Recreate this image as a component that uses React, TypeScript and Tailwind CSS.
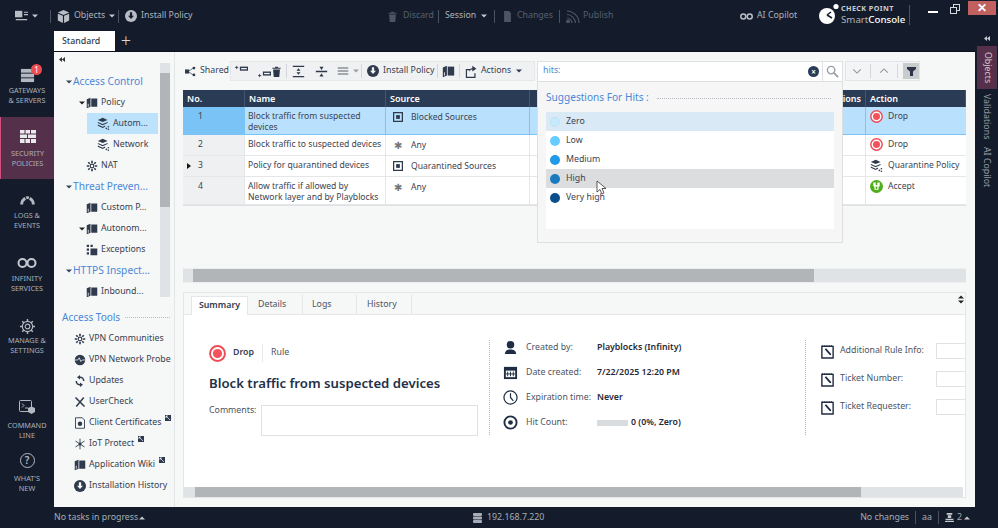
import React from "react";

const I = ({ s = 14, c = "currentColor", children, className = "" }: { s?: number; c?: string; children: React.ReactNode; className?: string }) => (
  <svg width={s} height={s} viewBox="0 0 16 16" fill={c} stroke="none" className={`shrink-0 ${className}`}>{children}</svg>
);
const Caret = ({ c = "#c4c9d0" }: { c?: string }) => (
  <svg width="6" height="4" viewBox="0 0 6 4" className="shrink-0"><path d="M0 0.5h6L3 3.5z" fill={c} /></svg>
);
const CaretUp = ({ c = "#c4c9d0" }: { c?: string }) => (
  <svg width="6" height="4" viewBox="0 0 6 4" className="shrink-0"><path d="M0 3.5h6L3 0.5z" fill={c} /></svg>
);
const DoubleLeft = ({ c = "#333" }: { c?: string }) => (
  <svg width="6" height="5" viewBox="0 0 6 5" className="shrink-0"><path d="M3 0v5L0 2.5zM6 0v5L3 2.5z" fill={c} /></svg>
);
const Sep = ({ c = "bg-[#4a5361]", h = "h-[13px]" }: { c?: string; h?: string }) => <div className={`w-px ${h} ${c} shrink-0`} />;
const ToolSep = () => <div className="w-px h-[14px] bg-[#d5d7da] shrink-0" />;

const InstallIcon = ({ s = 12, c = "#b9bec6", a = "#141c2b" }: { s?: number; c?: string; a?: string }) => (
  <I s={s}><circle cx="8" cy="8" r="8" fill={c} /><path d="M6.5 3h3v4.5H12L8 12 4 7.5h2.5z" fill={a} /></I>
);
const Trash = ({ s = 12, c = "#2a3548" }: { s?: number; c?: string }) => (
  <I s={s}><path d="M6 1h4v1.5h4V4H2V2.500h4zM3 5h10l-1 11H4z" fill={c} /></I>
);
const DropIcon = ({ s = 13 }: { s?: number }) => (
  <I s={s}><circle cx="8" cy="8" r="7" fill="#fff" stroke="#ee4c54" strokeWidth="1.8" /><circle cx="8" cy="8" r="4.3" fill="#f4525a" /></I>
);
const Layers = ({ s = 13, c = "#2f3a4d" }: { s?: number; c?: string }) => (
  <I s={s}><path d="M7 1l6 2.600-6 2.600-6-2.600z" fill={c} /><path d="M1 6l6 2.600L13 6v1.500L7 10.200 1 7.500z" fill={c} /><path d="M1 9.300l6 2.600 3-1.300v1.500l-3 1.300-6-2.600z" fill={c} /><circle cx="14" cy="12" r="1" fill={c} /><circle cx="11.500" cy="14" r="1" fill={c} /><circle cx="14" cy="15" r="1" fill={c} /></I>
);
const Book = ({ s = 13, c = "#2f3a4d" }: { s?: number; c?: string }) => (
  <I s={s}><path d="M1 3l5-2v12l-5 2z" fill={c} /><path d="M7 2l8 0v11H7z" fill={c} /><path d="M3 9v4" stroke="#fff" strokeWidth="1" /></I>
);
const Note = ({ c = "#1f2d44" }: { c?: string }) => (
  <I s={15}>
    <path d="M2 2.500h12V15H2z" fill="#fff" stroke={c} strokeWidth="1.500" />
    <path d="M2 1h1v2H2zM4 1h1v2H4zM6 1h1v2H6zM8 1h1v2H8zM10 1h1v2h-1zM12 1h1v2h-1z" fill={c} />
    <path d="M5 5.500l1.500-1 5 5.500 .5 2-2-.5z" fill={c} />
  </I>
);
const Gears = ({ s = 13, c = "#2f3a4d" }: { s?: number; c?: string }) => (
  <I s={s}><circle cx="8" cy="8" r="2.500" fill="none" stroke={c} strokeWidth="1.600" />
    <path d="M8 1v3M8 12v3M1 8h3M12 8h3M3 3l2 2M11 11l2 2M13 3l-2 2M5 11l-2 2" stroke={c} strokeWidth="2.200" />
  </I>
);

const RailItem = ({ icon, lines, active, h, box = "h-[24px]", gap = "mt-[6px]", pt = "pt-[2px]" }: { icon: React.ReactNode; lines: string[]; active?: boolean; h: string; box?: string; gap?: string; pt?: string }) => (
  <div className={`flex flex-col items-center justify-start ${h} ${pt} ${active ? "bg-[#54304a] border-l border-[#d14f7e]" : ""}`}>
    <div className={`${box} flex items-end justify-center`}>{icon}</div>
    <div className={`${gap} text-center text-[7.300px] leading-[9.500px] text-[#aab0b9] whitespace-nowrap`}>
      {lines.map((l) => <div key={l}>{l}</div>)}
    </div>
  </div>
);

const TreeHead = ({ t }: { t: string }) => (
  <div className="h-[21px] flex items-center pl-[12px] gap-[1px] text-[#4a88d8] text-[10.200px] whitespace-nowrap">
    <Caret c="#39465a" />{t}
  </div>
);
const TreeRow = ({ pl, icon, t, sel, caret }: { pl: string; icon: React.ReactNode; t: string; sel?: boolean; caret?: boolean }) => (
  <div className={`h-[21px] flex items-center ${pl} text-[#374151] text-[8.800px] whitespace-nowrap`}>
    <div className={`flex items-center gap-[3px] h-[21px] ${sel ? "bg-[#bde2fb] w-[71px] pl-[10px]" : ""}`}>
      {caret && <div className="-ml-[7px] -mr-[2px]"><Caret c="#222" /></div>}{icon}<span>{t}</span>
    </div>
  </div>
);
const ToolRow = ({ icon, t, ext }: { icon: React.ReactNode; t: string; ext?: boolean }) => (
  <div className="h-[21px] flex items-center pl-[20px] gap-[3px] text-[#374151] text-[8.800px] whitespace-nowrap">
    <div className="w-[12px] flex justify-center shrink-0">{icon}</div>
    <span>{t}</span>
    {ext && <svg width="6" height="6" viewBox="0 0 6 6" className="ml-[1px] -mt-[9px]"><rect width="6" height="6" fill="#2f3a4d" /><path d="M1 1l4 4M1 1h2M1 1v2" stroke="#fff" strokeWidth="0.700" fill="none" /></svg>}
  </div>
);

const HeadCell = ({ t, r }: { t: string; r?: boolean }) => (
  <div className={`h-[17px] flex items-center px-[4px] text-white font-semibold text-[9px] border-r border-[#45556d] whitespace-nowrap ${r ? "justify-end" : ""}`}>{t}</div>
);

const Any = () => <span className="w-[10px] text-center text-[#777] text-[10px] leading-[10px]">✱</span>;
const Grp = () => <I s={10}><rect x="1" y="1" width="14" height="14" fill="none" stroke="#2f3a4d" strokeWidth="2" /><rect x="5" y="5" width="6" height="6" fill="#2f3a4d" /></I>;

const rows = [
  { n: "1", name: ["Block traffic from suspected", "devices"], src: "Blocked Sources", any: false, act: "Drop", sel: true, h: "h-[28px]" },
  { n: "2", name: ["Block traffic to suspected devices"], src: "Any", any: true, act: "Drop", h: "h-[21px]" },
  { n: "3", name: ["Policy for quarantined devices"], src: "Quarantined Sources", any: false, act: "Quarantine Policy", h: "h-[21px]", arrow: true },
  { n: "4", name: ["Allow traffic if allowed by", "Network layer and by Playblocks"], src: "Any", any: true, act: "Accept", h: "h-[28px]" },
];

const ActionIcon = ({ a }: { a: string }) => {
  if (a === "Drop") return <DropIcon s={13} />;
  if (a === "Accept") return <I s={13}><circle cx="8" cy="8" r="8" fill="#4fae1b" /><path d="M4 3h3v3h2V3h3v4l-1.500 2v3h-5V9L4 7z" fill="#fff" /><path d="M7 8h2v3H7z" fill="#4fae1b" /></I>;
  return <Layers s={13} />;
};

const Level = ({ c, t, bg }: { c: string; t: string; bg?: string }) => (
  <div className={`h-[19px] flex items-center pl-[4px] gap-[6px] text-[8.800px] text-[#3b4350] ${bg ?? ""}`}>
    <div className={`w-[10px] h-[10px] rounded-full ${c}`} />{t}
  </div>
);

const Meta = ({ icon, k, children }: { icon: React.ReactNode; k: string; children: React.ReactNode }) => (
  <div className="h-[25px] flex items-center text-[8.800px]">
    <div className="w-[16px] flex justify-center shrink-0">{icon}</div>
    <div className="w-[71px] ml-[8px] text-[#4b5563] whitespace-nowrap">{k}</div>
    <div className="font-semibold text-[#1f2937] whitespace-nowrap">{children}</div>
  </div>
);
const Ticket = ({ k }: { k: string }) => (
  <div className="h-[28px] flex items-center text-[8.800px]">
    <Note />
    <div className="w-[96px] ml-[5px] text-[#4b5563] whitespace-nowrap">{k}</div>
    <div className="w-[30px] h-[16px] border border-r-0 border-[#dfe1e4] bg-white" />
  </div>
);

export default function App() {
  return (
    <div className="relative w-[998px] h-[528px] overflow-hidden bg-[#141c2b] flex flex-col font-['Noto_Sans',sans-serif]">
      {/* title bar */}
      <div className="h-[31px] shrink-0 flex items-start text-[8.800px] text-[#aeb4bd]">
        <div className="flex items-center h-[28px] mt-[2px] pl-[15px] whitespace-nowrap">
          <I s={13} c="#b9bec6"><rect x="0" y="1" width="9" height="8" /><path d="M11 2h5v1.500h-5zM11 5h5v1.500h-5zM1 11h14v1.500H1z" /></I>
          <div className="ml-[4px]"><Caret /></div>
          <div className="ml-[12px]"><Sep /></div>
          <div className="ml-[6px]"><I s={13} c="#b9bec6"><path d="M8 0l7 3-7 3-7-3zM1 4.500l6.300 2.700V16L1 13zM15 4.500L8.700 7.200V16L15 13z" /></I></div>
          <span className="ml-[4px] w-[29px]">Objects</span>
          <div className="ml-[6px]"><Caret /></div>
          <div className="ml-[3px]"><Sep /></div>
          <div className="ml-[6px]"><InstallIcon /></div>
          <span className="ml-[4px] w-[49px]">Install Policy</span>
        </div>
        <div className="flex items-center h-[28px] mt-[2px] ml-[197px] text-[#57606d] whitespace-nowrap">
          <Trash s={11} c="#4d5562" />
          <span className="ml-[5px] w-[28px]">Discard</span>
          <div className="ml-[7px]"><Sep /></div>
          <span className="ml-[6px] w-[31px] text-[#aeb4bd]">Session</span>
          <div className="ml-[5px]"><Caret /></div>
          <div className="ml-[7px]"><Sep /></div>
          <div className="ml-[7px]"><I s={11} c="#4d5562"><path d="M3 0h7l3 3v13H3z" /></I></div>
          <span className="ml-[4px] w-[35px]">Changes</span>
          <div className="ml-[7px]"><Sep /></div>
          <svg width="14" height="13" viewBox="0 0 14 13" fill="none" stroke="#4d5562" strokeWidth="1.200" className="ml-[6px]"><path d="M1 1c6 0 12 5 12 12M1 4.500c4 0 8.500 4 8.500 8.500M1 8c2.500 0 5 2.500 5 5" /><circle cx="2" cy="11.500" r="1.300" fill="#4d5562" /></svg>
          <span className="ml-[3px] w-[29px]">Publish</span>
        </div>
        <div className="flex items-center h-[28px] mt-[2px] ml-[128px] whitespace-nowrap">
          <svg width="13" height="7" viewBox="0 0 13 7" fill="none" stroke="#b9bec6" strokeWidth="1.500"><circle cx="3.300" cy="3.500" r="2.500" /><circle cx="9.700" cy="3.500" r="2.500" /></svg>
          <span className="ml-[4px] w-[39px]">AI Copilot</span>
        </div>
        <div className="flex items-center h-[28px] mt-[1px] ml-[23px]">
          <svg width="20" height="22" viewBox="0 0 20 22" className="-mt-[2px]">
            <circle cx="17" cy="3.500" r="2.600" fill="#fff" />
            <circle cx="8" cy="13" r="8" fill="#fff" />
            <path d="M8 12l5 3M8 12l4-3" stroke="#141c2b" strokeWidth="1.500" />
          </svg>
          <div className="ml-[2px] flex flex-col w-[63px]">
            <span className="text-[7.200px] leading-[9px] font-bold tracking-[0.4px] text-[#c9cdd3] whitespace-nowrap">CHECK POINT</span>
            <span className="text-[9.700px] leading-[13px] text-[#aeb4bd] whitespace-nowrap">Smart<span className="text-white font-medium">Console</span></span>
          </div>
          <div className="ml-[5px]"><Sep h="h-[20px]" /></div>
        </div>
        <div className="flex items-start ml-auto h-[15px] mt-[1px]">
          <div className="w-[10px] h-[2px] bg-white mt-[10px]" />
          <div className="relative w-[10px] h-[10px] ml-[12px] mt-[3px]">
            <div className="absolute right-0 top-0 w-[7px] h-[7px] border border-[#d6d9de]" />
            <div className="absolute left-0 bottom-0 w-[7px] h-[7px] border border-[#d6d9de] bg-[#141c2b]" />
          </div>
          <div className="ml-[8px] mr-[2px] w-[28px] h-[14px] bg-[#c0605f] flex items-center justify-center text-white text-[12px] leading-none font-bold">✕</div>
        </div>
      </div>

      {/* body */}
      <div className="flex-1 min-h-0 flex">
        {/* left rail */}
        <div className="w-[54px] shrink-0 flex flex-col pt-[25px]">
          <div className="relative">
            <RailItem h="h-[61px]" pt="pt-0" box="h-[27px]" gap="mt-[3px]" lines={["GATEWAYS", "& SERVERS"]} icon={
              <I s={15} c="#b4b9c1"><rect x="1" y="1" width="14" height="4" /><rect x="1" y="6" width="14" height="4" /><rect x="1" y="11" width="14" height="4" /></I>} />
            <div className="absolute top-[8px] left-[31px] w-[11px] h-[11px] rounded-full bg-[#ef4c50] text-white text-[8px] leading-[11px] text-center">1</div>
          </div>
          <RailItem active h="h-[62px]" lines={["SECURITY", "POLICIES"]} icon={
            <svg width="16" height="13" viewBox="0 0 16 13" fill="#e7e9ec"><path d="M0 0h4.500v3.500H0zM5.500 0H10v3.500H5.500zM11 0h5v3.500h-5zM0 4.500h7v3.500H0zM8 4.500h8v3.500H8zM0 9h4.500v4H0zM5.500 9H10v4H5.500zM11 9h5v4h-5z" /></svg>} />
          <RailItem h="h-[63px]" lines={["LOGS &", "EVENTS"]} icon={
            <svg width="17" height="9" viewBox="0 0 17 10" fill="none" stroke="#b4b9c1" strokeWidth="3.200"><path d="M2 9.500C2 6 3.500 4 6 2.500M7 2c1-.3 2-.3 3 0M11 2.500c2.500 1.500 4 3.500 4 7" /></svg>} />
          <RailItem h="h-[62px]" lines={["INFINITY", "SERVICES"]} icon={
            <svg width="20" height="10" viewBox="0 0 20 10" fill="none" stroke="#c4c8cf" strokeWidth="2"><circle cx="5.500" cy="5" r="4" /><circle cx="14.500" cy="5" r="4" /></svg>} />
          <RailItem h="h-[63px]" box="h-[28px]" gap="mt-[2px]" lines={["MANAGE &", "SETTINGS"]} icon={
            <svg width="15" height="15" viewBox="0 0 16 16" fill="none" stroke="#b4b9c1"><circle cx="8" cy="8" r="5.500" strokeWidth="1.200" /><circle cx="8" cy="8" r="2.500" strokeWidth="1.200" /><path d="M8 0v3M8 13v3M0 8h3M13 8h3M2.300 2.300l2 2M11.700 11.700l2 2M13.700 2.300l-2 2M4.300 11.700l-2 2" strokeWidth="1.500" /></svg>} />
          <div className="h-[22px]" />
          <RailItem h="h-[54px]" lines={["COMMAND", "LINE"]} icon={
            <svg width="16" height="15" viewBox="0 0 16 15" fill="none" stroke="#b4b9c1"><rect x="0.500" y="0.500" width="12" height="11" rx="1" /><path d="M3 3.500l2 2-2 2M6 8h3" /><path d="M9 8l3.500-1.500L16 8v4l-3.500 2L9 12z" fill="#b4b9c1" stroke="none" /></svg>} />
          <RailItem h="h-[50px]" lines={["WHAT'S", "NEW"]} icon={
            <div className="w-[15px] h-[15px] rounded-full border-[1.500px] border-[#b4b9c1] text-[#b4b9c1] text-[10px] leading-[12px] text-center font-semibold">?</div>} />
        </div>

        {/* center */}
        <div className="flex-1 min-w-0 flex flex-col">
          <div className="h-[20px] shrink-0 flex items-stretch">
            <div className="w-[61px] bg-white flex items-center pl-[8px] pt-[1px] text-[8.800px] font-medium text-[#2f3a4d]">Standard</div>
            <div className="ml-[4px] text-[#d6d9de] text-[18px] leading-[19px] w-[14px] text-center font-light">+</div>
          </div>
          <div className="flex-1 min-h-0 flex bg-[#f6f7f7] border-t border-[#0b111b] relative">
            {/* tree */}
            <div className="w-[121px] shrink-0 border-r border-[#e3e5e8] flex flex-col">
              <div className="h-[19px] pl-[5px] flex items-start pt-[5px]"><DoubleLeft /></div>
              <div className="flex">
                <div className="w-[106px] shrink-0 min-w-0 overflow-hidden">
                  <TreeHead t="Access Control" />
                  <TreeRow pl="pl-[32px]" caret icon={<Book s={12} />} t="Policy" />
                  <TreeRow pl="pl-[33px]" sel icon={<Layers />} t="Autom..." />
                  <TreeRow pl="pl-[43px]" icon={<Layers />} t="Network" />
                  <TreeRow pl="pl-[32px]" icon={<Gears s={12} />} t="NAT" />
                  <TreeHead t="Threat Preven..." />
                  <TreeRow pl="pl-[32px]" icon={<Book s={12} />} t="Custom P..." />
                  <TreeRow pl="pl-[32px]" caret icon={<Book s={12} />} t="Autonom..." />
                  <TreeRow pl="pl-[32px]" icon={<I s={12} c="#2f3a4d"><rect x="1" y="1" width="3" height="3" /><rect x="6" y="1" width="3" height="3" /><rect x="1" y="6" width="3" height="3" /><rect x="6" y="6" width="9" height="9" /><rect x="1" y="11" width="3" height="3" /></I>} t="Exceptions" />
                  <TreeHead t="HTTPS Inspect..." />
                  <TreeRow pl="pl-[32px]" icon={<Book s={12} />} t="Inbound..." />
                </div>
                <div className="w-[10px] h-[234px] -mt-[8px] bg-[#dfe3e6] shrink-0 pt-[10px]">
                  <div className="h-[134px] bg-[#b1b5b8]" />
                </div>
              </div>
              <div className="mt-[5px] h-[21px] flex items-center pl-[8px] gap-[5px] text-[#4a88d8] text-[10px] pr-[4px]">
                <span className="whitespace-nowrap">Access Tools</span>
                <div className="flex-1 border-t border-dotted border-[#b8bcc2]" />
              </div>
              <ToolRow icon={<Gears s={12} />} t="VPN Communities" />
              <ToolRow icon={<I s={12} c="#2f3a4d"><circle cx="8" cy="8" r="7" /><path d="M1 8h4l2-3 2 5 2-2h4" stroke="#fff" fill="none" /></I>} t="VPN Network Probe" />
              <ToolRow icon={<I s={12} c="#2f3a4d"><path d="M8 2a6 6 0 0 1 6 6h-2a4 4 0 0 0-4-4V6L4 3l4-3zM8 14a6 6 0 0 1-6-6h2a4 4 0 0 0 4 4v-2l4 3-4 3z" /></I>} t="Updates" />
              <ToolRow icon={<I s={12} c="#2f3a4d"><path d="M2 2l12 12M13 2L3 14" stroke="#2f3a4d" strokeWidth="2" /></I>} t="UserCheck" />
              <ToolRow ext icon={<I s={12} c="#2f3a4d"><path d="M3 1h8l3 3v11H2V1z" fill="none" stroke="#2f3a4d" strokeWidth="1.200" /><circle cx="8" cy="9" r="3" /></I>} t="Client Certificates" />
              <ToolRow ext icon={<I s={12} c="#2f3a4d"><circle cx="8" cy="8" r="2" /><path d="M8 1v14M2 4l12 8M14 4L2 12" stroke="#2f3a4d" strokeWidth="1.200" /></I>} t="IoT Protect" />
              <ToolRow ext icon={<Book s={12} />} t="Application Wiki" />
              <ToolRow icon={<InstallIcon s={12} c="#2f3a4d" a="#f6f7f7" />} t="Installation History" />
            </div>

            {/* content */}
            <div className="flex-1 min-w-0 flex flex-col pl-[8px] pr-[9px]">
              {/* toolbar */}
              <div className="h-[20px] mt-[9px] shrink-0 flex items-center text-[8.800px] text-[#374151]">
                <div className="flex items-center gap-[4px] w-[47px] pl-[2px]">
                  <I s={11} c="#2f3a4d"><rect x="0" y="5" width="6" height="6" /><circle cx="13" cy="3" r="2" /><circle cx="13" cy="13" r="2" /><path d="M6 7l6-4M6 9l6 4" stroke="#2f3a4d" /></I>
                  <span className="whitespace-nowrap">Shared</span>
                </div>
                <div className="flex items-center h-[20px] bg-[#f0f1f2] border border-[#e6e7e9] pl-[4px] w-[305px] whitespace-nowrap">
                  <I s={13} c="#2f3a4d"><path d="M6 2h10v5H6z" /><path d="M7.500 3.700h7v1.600h-7z" fill="#f0f1f2" /><path d="M0 3h4M2 1v4" stroke="#2f3a4d" strokeWidth="1" /></I>
                  <I s={13} c="#2f3a4d" className="ml-[10px]"><path d="M6 8h10v5H6z" /><path d="M7.500 9.700h7v1.600h-7z" fill="#f0f1f2" /><path d="M0 13h4M2 11v4" stroke="#2f3a4d" strokeWidth="1" /></I>
                  <Trash s={11} c="#2a3548" />
                  <div className="ml-[4px]"><ToolSep /></div>
                  <I s={13} c="#2f3a4d" className="ml-[5px]"><path d="M1 1h14v1.500H1zM1 13.500h14V15H1zM8 4l2.500 3h-5zM8 12l-2.500-3h5z" /></I>
                  <I s={13} c="#2f3a4d" className="ml-[10px]"><path d="M1 7h14v2H1zM8 6L5.500 2h5zM8 10l2.500 4h-5z" /></I>
                  <I s={12} c="#8b9199" className="ml-[9px]"><path d="M1 3h14v2H1zM1 7h14v2H1zM1 11h14v2H1z" /></I>
                  <div className="ml-[4px]"><Caret c="#9a9fa6" /></div>
                  <div className="ml-[2px]"><ToolSep /></div>
                  <div className="ml-[5px]"><InstallIcon s={12} c="#2f3a4d" a="#f0f1f2" /></div>
                  <span className="ml-[4px] w-[50px]">Install Policy</span>
                  <div className="ml-[4px]"><ToolSep /></div>
                  <div className="ml-[4px]"><Book s={13} /></div>
                  <div className="ml-[4px]"><ToolSep /></div>
                  <I s={13} c="#2f3a4d" className="ml-[5px]"><path d="M1 5h6v1.500H2.500v8h9V10H13v6H1zM9 1l5 3.500L9 8V5.500C7 5.500 5.500 7 5 9c0-3 1.500-5 4-5z" /></I>
                  <span className="ml-[3px] w-[30px]">Actions</span>
                  <div className="ml-[5px]"><Caret c="#2f3a4d" /></div>
                </div>
                <div className="ml-[2px] flex items-center h-[21px] w-[306px] bg-white border border-[#dfe1e4] pl-[5px]">
                  <span className="text-[#4a88d8] flex-1">hits:</span>
                  <div className="w-[11px] h-[11px] rounded-full bg-[#2a3b55] text-white text-[8px] leading-[11px] text-center font-bold mr-[3px]">×</div>
                  <div className="w-[20px] h-[19px] border-l border-[#dfe1e4] flex items-center justify-center">
                    <svg width="13" height="13" viewBox="0 0 14 14" fill="none" stroke="#9aa0a7" strokeWidth="1.500"><circle cx="5.500" cy="5.500" r="4" /><path d="M8.500 8.500L13 13" strokeWidth="2" /></svg>
                  </div>
                </div>
                <div className="ml-[2px] flex items-center h-[20px] w-[75px] bg-[#f3f4f5] border border-[#e3e5e8] pl-[1px] gap-[5px]">
                  <svg width="19" height="10" viewBox="0 0 19 10" fill="none" stroke="#8f969e" strokeWidth="1.200" className="ml-[2px]"><path d="M5 3l4.500 4.500L14 3" /></svg>
                  <ToolSep />
                  <svg width="19" height="10" viewBox="0 0 19 10" fill="none" stroke="#8f969e" strokeWidth="1.200"><path d="M5 7l4.500-4.500L14 7" /></svg>
                  <ToolSep />
                  <div className="w-[19px] h-[16px] bg-[#c9cccf] flex items-center justify-center">
                    <svg width="9" height="9" viewBox="0 0 9 9"><path d="M0 0h9v2L6 4.500V9H3V4.500L0 2z" fill="#2a3548" /></svg>
                  </div>
                </div>
              </div>

              {/* table */}
              <div className="mt-[9px] shrink-0 border-b border-[#dfe1e4] bg-white">
                <div className="grid grid-cols-[62px_141px_144px_336px_100px] bg-[#2a3b55]">
                  <HeadCell t="No." /><HeadCell t="Name" /><HeadCell t="Source" /><HeadCell t="Conditions" r /><HeadCell t="Action" />
                </div>
                {rows.map((r) => (
                  <div key={r.n} className={`grid grid-cols-[62px_141px_144px_336px_100px] ${r.h} text-[8.600px] leading-[11px] text-[#3b4350] border-b ${r.sel ? "bg-[#b9e1fd] border-[#79c3f7]" : "bg-white border-[#e4e6e8]"}`}>
                    <div className={`pt-[4px] pl-[4px] flex gap-[3px] border-r ${r.sel ? "bg-[#79c3f7] border-[#79c3f7]" : "bg-[#eff0f1] border-[#e4e6e8]"}`}>
                      <div className="w-[8px] pt-[3px]">{r.arrow && <svg width="4" height="6" viewBox="0 0 4 6"><path d="M0 0l4 3-4 3z" fill="#111" /></svg>}</div>
                      <span>{r.n}</span>
                    </div>
                    <div className={`pt-[4px] px-[3px] border-r whitespace-nowrap ${r.sel ? "border-[#79c3f7]" : "border-[#e4e6e8]"}`}>
                      {r.name.map((l) => <div key={l}>{l}</div>)}
                    </div>
                    <div className={`pt-[5px] pl-[7px] flex items-start gap-[8px] border-r ${r.sel ? "border-[#79c3f7]" : "border-[#e4e6e8]"}`}>
                      {r.any ? <Any /> : <Grp />}<span>{r.src}</span>
                    </div>
                    <div className={`border-r ${r.sel ? "border-[#79c3f7]" : "border-[#e4e6e8]"}`} />
                    <div className="pt-[3px] pl-[4px] flex items-start gap-[5px] whitespace-nowrap">
                      <ActionIcon a={r.act} /><span className="pt-[1px]">{r.act}</span>
                    </div>
                  </div>
                ))}
              </div>

              {/* horizontal scroll */}
              <div className="mt-[62px] shrink-0 h-[15px] bg-[#dfe3e6] pl-[10px] border-y border-[#eceef0]">
                <div className="w-[621px] h-full bg-[#b1b5b8]" />
              </div>

              {/* bottom panel */}
              <div className="mt-[9px] relative flex flex-col h-[206px] border border-[#e4e6e8] bg-white shrink-0">
                <div className="h-[22px] bg-[#f6f7f7] border-b border-[#e4e6e8] flex items-end pl-[7px] text-[8.800px] text-[#4b5563]">
                  <div className="w-[57px] h-[19px] bg-white border-x border-t border-[#e4e6e8] -mb-px flex items-center justify-center font-semibold text-[#2f3a4d]">Summary</div>
                  <div className="w-[55px] h-[19px] border-r border-[#e4e6e8] flex items-center pl-[10px]">Details</div>
                  <div className="w-[54px] h-[19px] border-r border-[#e4e6e8] flex items-center pl-[9px]">Logs</div>
                  <div className="w-[55px] h-[19px] border-r border-[#e4e6e8] flex items-center pl-[10px]">History</div>
                  <div className="ml-auto mr-[1px] self-start mt-[2px] flex flex-col gap-[1px]"><CaretUp c="#222" /><Caret c="#222" /></div>
                </div>
                <div className="flex-1 min-h-0 flex overflow-hidden">
                  <div className="w-[305px] shrink-0 pl-[25px] pt-[29px]">
                    <div className="flex items-center h-[18px] text-[8.800px]">
                      <DropIcon s={17} />
                      <span className="ml-[7px] font-semibold text-[#374151]">Drop</span>
                      <div className="ml-[8px] w-px h-[18px] bg-[#e4e6e8]" />
                      <span className="ml-[8px] text-[#4b5563]">Rule</span>
                    </div>
                    <div className="mt-[12px] text-[13.200px] leading-[18px] font-semibold text-[#233047] whitespace-nowrap">Block traffic from suspected devices</div>
                    <div className="mt-[13px] flex text-[8.800px] text-[#4b5563]">
                      <span className="w-[52px] -mt-[1px]">Comments:</span>
                      <div className="w-[217px] h-[31px] border border-[#dfe1e4] bg-white" />
                    </div>
                  </div>
                  <div className="mt-[25px] h-[95px] border-l border-dotted border-[#b0b4b9]" />
                  <div className="w-[315px] shrink-0 pl-[12px] pt-[20px]">
                    <Meta k="Created by:" icon={<I s={15} c="#1f2d44"><circle cx="8" cy="5" r="4" /><path d="M2 15c0-4 3-5 6-5s6 1 6 5z" /></I>}>Playblocks (Infinity)</Meta>
                    <Meta k="Date created:" icon={<I s={15} c="#1f2d44"><path d="M1 2h14v13H1z" /><path d="M3 6h10v7H3z" fill="#fff" /><path d="M5 7v5M8 7v5M11 7v5M3 9.500h10" stroke="#1f2d44" /></I>}>7/22/2025 12:20 PM</Meta>
                    <Meta k="Expiration time:" icon={<svg width="15" height="15" viewBox="0 0 16 16" fill="none" stroke="#1f2d44" strokeWidth="1.300"><circle cx="8" cy="8" r="7" /><path d="M8 3.500V8l3 3.500" /></svg>}>Never</Meta>
                    <Meta k="Hit Count:" icon={<svg width="15" height="15" viewBox="0 0 16 16" fill="none" stroke="#1f2d44" strokeWidth="2"><circle cx="8" cy="8" r="6.500" /><circle cx="8" cy="8" r="2.500" fill="#1f2d44" stroke="none" /></svg>}>
                      <span className="flex items-center gap-[3px]"><span className="w-[31px] h-[6px] bg-[#d9dcdf]" />0 (0%, Zero)</span>
                    </Meta>
                  </div>
                  <div className="mt-[25px] h-[95px] border-l border-dotted border-[#b0b4b9]" />
                  <div className="pl-[14px] pt-[22px]">
                    <Ticket k="Additional Rule Info:" />
                    <Ticket k="Ticket Number:" />
                    <Ticket k="Ticket Requester:" />
                  </div>
                </div>
                <div className="h-[10px] mb-[0px] mr-[2px] bg-[#dfe3e6] pl-[11px]">
                  <div className="w-[666px] h-full bg-[#b1b5b8]" />
                </div>
              </div>
            </div>

            {/* suggestions dropdown */}
            <div className="absolute left-[483px] top-[29px] w-[306px] h-[162px] bg-[#f6f6f6] border border-[#dcdee0] flex flex-col px-[8px]">
              <div className="h-[30px] shrink-0 flex items-center gap-[8px] pt-[2px] text-[#4a88d8] text-[10.100px]">
                <span className="whitespace-nowrap">Suggestions For Hits :</span>
                <div className="flex-1 border-t border-dotted border-[#b8bcc2] mr-[3px]" />
              </div>
              <div className="w-[288px] h-[117px] bg-white flex flex-col">
                <Level c="bg-[#c9eafc] border border-[#bfe2f5]" t="Zero" bg="bg-[#d9e9f6]" />
                <Level c="bg-[#66ccff]" t="Low" />
                <Level c="bg-[#1f9ae8]" t="Medium" />
                <Level c="bg-[#1a7abf]" t="High" bg="bg-[#dcddde]" />
                <Level c="bg-[#0a4f8c]" t="Very high" />
              </div>
            </div>
            {/* mouse pointer */}
            <svg width="11" height="15" viewBox="0 0 11 15" className="absolute left-[542px] top-[128px]">
              <path d="M1 1v11l3-2.500 2 4.500 2-1-2-4.500h4z" fill="#fff" stroke="#333" strokeWidth="0.800" />
            </svg>
          </div>
        </div>

        {/* right rail */}
        <div className="w-[23px] shrink-0 flex flex-col items-center text-[8.800px] text-[#969ca5]">
          <div className="h-[15px] flex items-center"><DoubleLeft c="#c4c9d0" /></div>
          <div className="w-[20px] h-[43px] ml-[1px] bg-[#54304a] text-[#d9c9d3] flex items-center justify-center [writing-mode:vertical-rl]">Objects</div>
          <div className="h-[49px] mt-[3px] flex items-center justify-center [writing-mode:vertical-rl] whitespace-nowrap">Validations</div>
          <div className="h-[44px] mt-[4px] flex items-center justify-center [writing-mode:vertical-rl] whitespace-nowrap">AI Copilot</div>
        </div>
      </div>

      {/* status bar */}
      <div className="h-[21px] shrink-0 flex items-center pl-[54px] text-[8.800px] text-[#a7adb6]">
        <span className="whitespace-nowrap w-[79px]">No tasks in progress</span>
        <div className="ml-[6px]"><CaretUp /></div>
        <div className="ml-[328px]"><svg width="9" height="10" viewBox="0 0 9 10" fill="#a7adb6"><rect width="9" height="3" rx="1" /><rect y="3.500" width="9" height="3" rx="1" /><rect y="7" width="9" height="3" rx="1" /></svg></div>
        <span className="ml-[5px] whitespace-nowrap">192.168.7.220</span>
        <span className="ml-auto whitespace-nowrap">No changes</span>
        <div className="ml-[6px]"><Sep /></div>
        <span className="ml-[6px]">aa</span>
        <div className="ml-[6px]"><Sep /></div>
        <div className="ml-[6px]"><I s={9} c="#c4c9d0"><path d="M3 0h10v3H3zM5 4h6v5H5zM1 10h14v3H1zM0 14h16v2H0z" /></I></div>
        <span className="ml-[3px]">2</span>
        <div className="ml-[2px] mr-[28px]"><CaretUp /></div>
      </div>
    </div>
  );
}
